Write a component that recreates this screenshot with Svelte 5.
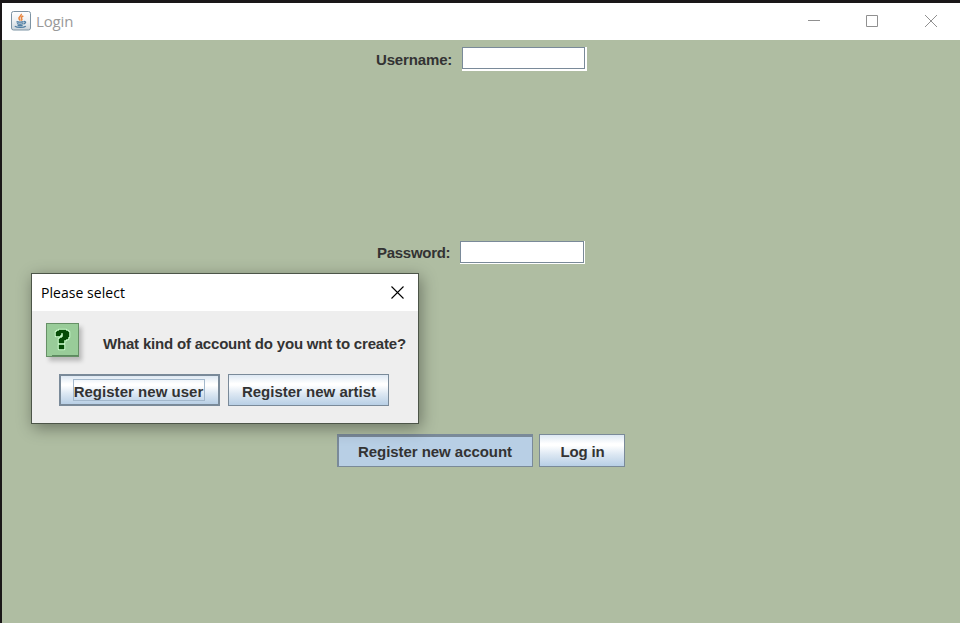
<script>
  let username = $state('');
  let password = $state('');
  const mark =
    'M10 13V9h1V8h2V7h7v1h2v1h1v5h-1v2h-2v1h-2v3h-5v-4h1v-1h2v-1h1v-4h-2v2h-1v1zM13 22h5v4h-5z';
</script>

<div class="window">
  <header class="titlebar">
    <svg class="java" width="20" height="20" viewBox="0 0 20 20">
      <defs>
        <linearGradient id="jg" x1="0" y1="0" x2="0" y2="1">
          <stop offset="0" stop-color="#fff" /><stop offset=".5" stop-color="#eef1f3" /><stop offset="1" stop-color="#c9d3da" />
        </linearGradient>
      </defs>
      <rect x=".5" y=".5" width="19" height="18.5" rx="2" fill="url(#jg)" stroke="#7d93a3" />
      <path d="M10.2 2.8c1 1.9-3 2.8-2.2 4.8.3.8 1 1.2 1.1 2M12.3 5c-2 .9-2.5 1.8-1.6 2.8.5.6.2 1.2-.4 1.8" fill="none" stroke="#e8843c" stroke-width="1.5" />
      <path d="M5.5 10.6c1.5.8 5.6.7 7.2 0M6 12.5c1.5.7 4.6.7 6 0M6.6 14.1c1.3.6 3.7.6 5 0M13 10.5c2.4-.2 2 1.9-.5 2.5M3.8 15.3c2.5 1.5 8.9 1.4 11-.1" fill="none" stroke="#4f7ea3" stroke-width="1.3" />
    </svg>
    <span class="name">Login</span>
    <svg class="controls" width="132" height="14" viewBox="0 0 132 14" fill="none" stroke="#909090">
      <path d="M0 6.5h12M58.5 1.5h11v11h-11zM117 1l12 12M129 1l-12 12" />
    </svg>
  </header>

  <main>
    <section class="user">
      <label for="username">Username:</label>
      <span class="field"><input id="username" bind:value={username} /></span>
    </section>
    <section class="pass">
      <label for="password">Password:</label>
      <span class="field"><input id="password" type="password" bind:value={password} /></span>
    </section>
    <section class="actions">
      <button class="pressed"><span>Register new account</span></button>
      <button class="login"><span>Log in</span></button>
    </section>
  </main>

  <div class="dialog" role="dialog" aria-label="Please select">
    <div class="dialog-title">
      <span>Please select</span>
      <svg width="13" height="13" viewBox="0 0 13 13" fill="none" stroke="#000" stroke-width="1.1"><path d="M.5.5l12 12M12.5.5l-12 12" /></svg>
    </div>
    <div class="message">
      <svg class="question" width="33" height="34" viewBox="0 0 33 34">
        <rect x=".5" y=".5" width="32" height="33" fill="#99cc99" stroke="#669066" />
        <path d="M6 32.5h26.5" stroke="#5c8a5f" />
        <path d={mark} fill="#c7f8c8" stroke="#c7f8c8" stroke-width="2.6" stroke-linejoin="round" />
        <path d={mark} fill="#064b06" stroke="#064b06" stroke-width=".4" />
      </svg>
      <span class="ask">What kind of account do you wnt to create?</span>
    </div>
    <div class="choices">
      <button class="default"><span>Register new user</span></button>
      <button class="artist"><span>Register new artist</span></button>
    </div>
  </div>
</div>

<style>
  :global(body) { margin: 0; overflow: hidden; }
  * { box-sizing: border-box; }
  .window {
    position: relative;
    width: 960px;
    height: 623px;
    display: flex;
    flex-direction: column;
    border-top: 3px solid #1a1718;
    border-left: 2px solid #1a1718;
    background: #afbda2;
    color: #333;
    font: bold 15px "Liberation Sans", Arial, sans-serif;
  }
  .titlebar {
    flex: none;
    height: 37px;
    display: flex;
    align-items: center;
    padding: 0 20px 0 9px;
    background: #fff;
  }
  .java { margin-top: -1px; }
  .name {
    margin-left: 5px;
    margin-top: -1px;
    color: #999;
    font: 15px "Open Sans", "Noto Sans", sans-serif;
    letter-spacing: -0.15px;
  }
  .controls { margin-left: auto; margin-top: -1px; }
  main { flex: 1; display: grid; grid-template-rows: 194px 194px 1fr; }
  section { display: flex; align-items: flex-start; }
  .user { padding: 7px 0 0 374px; }
  .pass { padding: 7px 0 0 375px; }
  .actions { padding: 6px 0 0 335px; gap: 6px; }
  label { line-height: 24px; white-space: nowrap; }
  .user label { width: 86px; line-height: 26px; letter-spacing: -0.15px; }
  .pass label { width: 83px; letter-spacing: -0.28px; }
  .field { display: block; background: #fff; }
  .user .field { width: 125px; height: 24px; padding: 0 2px 2px 0; }
  .pass .field { width: 125px; height: 23px; padding: 0 1px 1px 0; }
  input {
    display: block;
    width: 100%;
    height: 100%;
    margin: 0;
    padding: 0 3px;
    border: 1px solid #7a8a99;
    border-radius: 0;
    outline: none;
    background: #fff;
    font: inherit;
  }
  button {
    display: flex;
    align-items: center;
    justify-content: center;
    margin: 0;
    padding: 3px 0 0;
    border: 1px solid #7a8a99;
    background: linear-gradient(#dde8f3 0, #fff 28%, #fff 34%, #dde8f3 62%, #b8cfe5 100%);
    color: #333;
    font: inherit;
    white-space: nowrap;
  }
  .actions button { height: 33px; }
  .actions .pressed {
    width: 196px;
    border-width: 3px 1px 1px 2px;
    padding: 0 1px 1px 0;
    background: #b8cfe5;
    letter-spacing: -0.05px;
  }
  .actions .login { width: 86px; padding: 1px 0 0 1px; letter-spacing: -0.15px; }
  .dialog {
    position: absolute;
    left: 29px;
    top: 270px;
    width: 388px;
    height: 151px;
    border: 1px solid #4c5548;
    background: #eee;
    box-shadow: 2px 4px 15px rgba(0, 0, 0, 0.38);
  }
  .dialog-title {
    height: 37px;
    display: flex;
    align-items: center;
    justify-content: space-between;
    padding: 0 14px 0 9px;
    background: #fff;
    color: #000;
    font: 14px "Open Sans", "Noto Sans", sans-serif;
    letter-spacing: 0.05px;
  }
  .message { display: flex; height: 63px; padding: 12px 0 0 14px; }
  .question { filter: drop-shadow(3px 4px 2px rgba(0, 0, 0, 0.22)); }
  .ask { margin-left: 24px; line-height: 42px; white-space: nowrap; letter-spacing: -0.19px; }
  .choices { display: flex; gap: 8px; padding-left: 27px; }
  .choices button { width: 161px; height: 32px; }
  .choices .artist { padding-left: 1px; }
  .choices .default { border-width: 2px; padding: 0 2px 0 0; }
  .default span {
    height: 22px;
    width: 132px;
    line-height: 23px;
    border: 1px solid #a3b8cc;
    display: flex;
    justify-content: center;
    letter-spacing: 0.03px;
  }
</style>
